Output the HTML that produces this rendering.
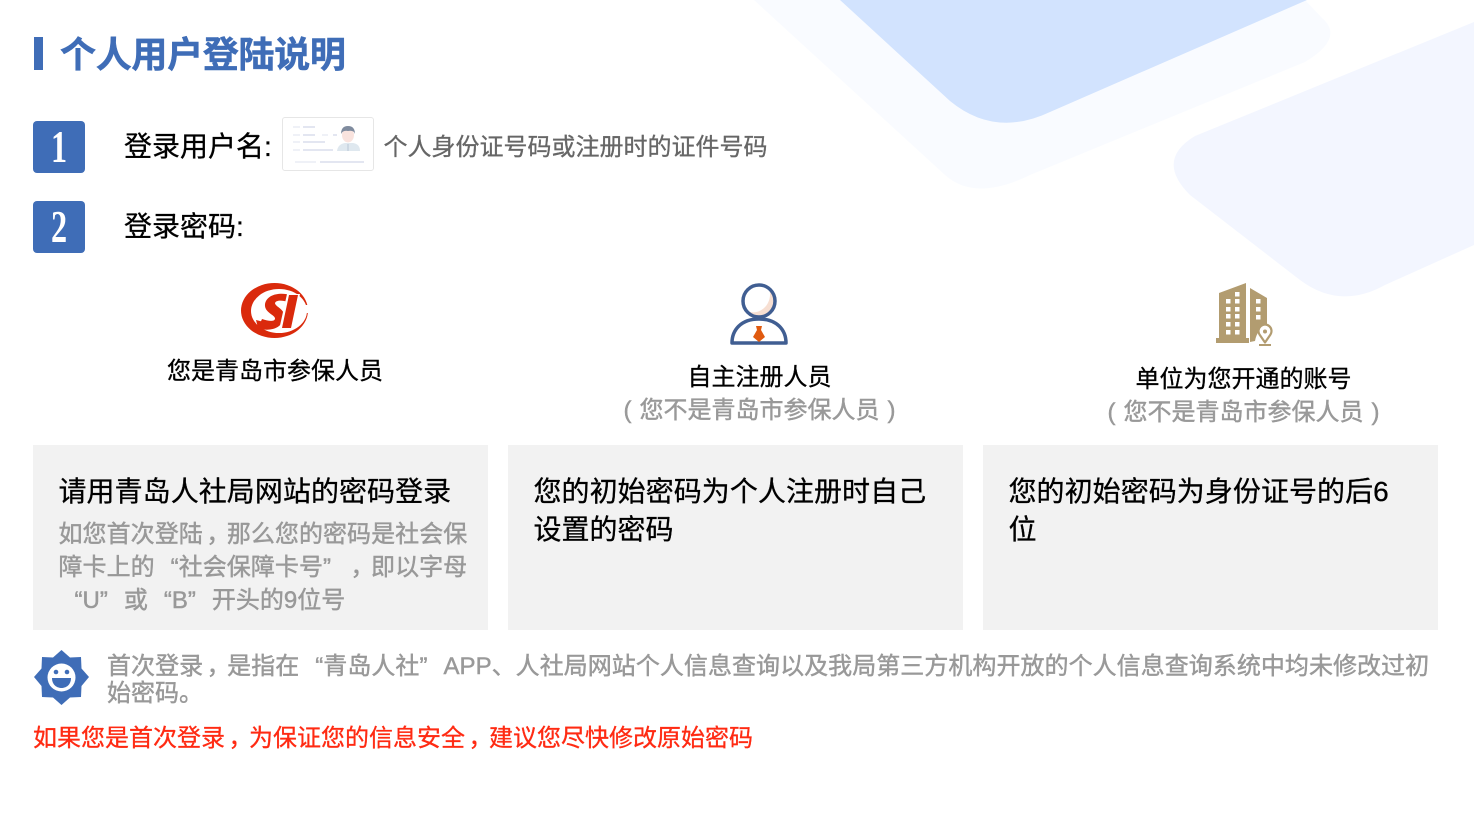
<!DOCTYPE html>
<html lang="zh">
<head>
<meta charset="utf-8">
<style>
html,body{margin:0;padding:0;background:#fff}
body{width:1474px;height:820px;position:relative;overflow:hidden;font-family:"Liberation Sans","Noto Sans CJK SC",sans-serif;color:#000}
.t{position:absolute;white-space:nowrap;line-height:1;-webkit-text-stroke:.3px currentColor}
.c{position:absolute;background:#f2f2f2;top:445px;width:455px;height:185px}
.n{position:absolute;left:33px;width:52px;height:52px;background:#3f6db7;border-radius:4px;overflow:hidden}
.n span{position:absolute;left:0;width:52px;top:3px;text-align:center;color:#fff;font:bold 46px/46px "Liberation Serif",serif;transform:scaleX(.7)}
.g{color:#999;-webkit-text-stroke:.45px currentColor}
.l,.r,.m{display:inline-block;width:24px;font-family:"Liberation Sans",sans-serif}
.l{text-align:right}.r{text-align:left}
.m{text-align:center}
.m i{font-style:normal;font-family:"Noto Sans CJK SC",sans-serif;position:relative;left:7px;display:inline-block;width:24px;margin-left:-7px;text-align:left;margin-right:0}
.pa,.pb{display:inline-block;width:24px;text-align:center;font-family:"Liberation Sans",sans-serif}
</style>
</head>
<body>
<svg style="position:absolute;left:0;top:0" width="1474" height="820">
<path d="M754 0L945 175Q975 202 1030 175L1305 62Q1345 38 1322 18L1305 0Z" fill="#f9fbff"/>
<path d="M840 0L950 101Q995 138 1050 112L1307 0Z" fill="#d2e3fe"/>
<path d="M1474 22L1195 136Q1155 160 1190 195L1300 280Q1340 310 1385 285L1474 245Z" fill="#f3f6ff"/>
</svg>

<div style="position:absolute;left:34px;top:37px;width:9px;height:33px;background:#3f6db7"></div>
<div class="t" style="left:60px;top:37px;font-size:36px;font-weight:700;letter-spacing:-.3px;color:#3f6db7;-webkit-text-stroke:.5px #3f6db7">个人用户登陆说明</div>

<div class="n" style="top:121px"><span>1</span></div>
<div class="n" style="top:201px"><span>2</span></div>

<div class="t" style="left:124px;top:133px;font-size:28px">登录用户名:</div>
<div style="position:absolute;left:282px;top:117px;width:90px;height:52px;border:1px solid #e6e6e6;border-radius:3px;background:#fff"></div>
<svg style="position:absolute;left:282px;top:117px" width="92" height="54">
<g fill="#e3e6f1">
<rect x="21" y="9" width="12" height="2"/><rect x="21" y="17" width="12" height="2"/><rect x="21" y="24" width="22" height="2"/><rect x="21" y="32" width="30" height="2"/><rect x="51" y="17" width="4" height="2"/><rect x="38" y="44" width="44" height="2"/>
</g>
<g fill="#eff1f7">
<rect x="11" y="9" width="7" height="2"/><rect x="11" y="17" width="7" height="2"/><rect x="11" y="24" width="7" height="2"/><rect x="11" y="32" width="7" height="2"/><rect x="40" y="17" width="6" height="2"/><rect x="13" y="44" width="21" height="2"/>
</g>
<path d="M55 34Q56 27 63 26H71Q78 27 78 34Z" fill="#dfe8ef"/>
<path d="M66 27V34" stroke="#b9c6d6" stroke-width="1"/>
<ellipse cx="66" cy="18" rx="6" ry="7.500" fill="#f9e3de"/>
<path d="M59 17Q59 9 66 9Q73 9 73 17Q72 13 66 14Q61 13 59 17Z" fill="#7f8b9e"/>
</svg>
<div class="t" style="left:383.500px;top:136px;font-size:24px;color:#666">个人身份证号码或注册时的证件号码</div>

<div class="t" style="left:124px;top:213px;font-size:28px">登录密码:</div>

<svg style="position:absolute;left:238px;top:280px" width="74" height="62" viewBox="0 0 74 62">
<path fill-rule="evenodd" d="M3 30.500A33.500 27.500 0 1 1 70 30.500A33.500 27.500 0 1 1 3 30.500ZM13 31A28 22 0 1 0 69 31A28 22 0 1 0 13 31Z" fill="#da2a0c"/>
<path d="M20 48L24 39C30 41 36 42 37 39C38 35 26 33 27 24C29 14 42 12 53 15L50 22C44 20 38 20 37 23C37 27 48 29 46 38C44 49 30 52 20 48Z" fill="#da2a0c"/>
<path d="M20 48L18 40L26 42L24 50Z" fill="#da2a0c"/>
<path d="M49 14H62L54 50H41Z" fill="#fff"/>
<path d="M51 15H60L53 48H44Z" fill="#da2a0c"/>
<rect x="65" y="25" width="8" height="8" fill="#fff"/>
</svg>
<div class="t" style="left:167px;top:360px;font-size:24px">您是青岛市参保人员</div>

<svg style="position:absolute;left:725px;top:280px" width="68" height="68" viewBox="0 0 68 68">
<path d="M7 63C7 50 16 39 34 39C52 39 61 50 61 63Z" fill="#fff" stroke="#405e92" stroke-width="3.500" stroke-linejoin="round"/>
<circle cx="34" cy="21" r="16" fill="#fff"/>
<path d="M21 30C27 34 35 33 41 26C45 21 46 14 44 9C50 14 52 27 45 33C38 39 26 38 21 30Z" fill="#f7dfd2"/>
<circle cx="34" cy="21" r="16" fill="none" stroke="#405e92" stroke-width="3.500"/>
<path d="M31 46H37L36 50L40 57L34 62L28 57L32 50Z" fill="#e05a0f"/>
</svg>
<div class="t" style="left:687.500px;top:366px;font-size:24px">自主注册人员</div>
<div class="t g" style="left:615.500px;top:399px;font-size:24px"><span class="pa">(</span>您不是青岛市参保人员<span class="pb">)</span></div>

<svg style="position:absolute;left:1199px;top:275px" width="90" height="75" viewBox="0 0 90 75">
<path d="M20 18L47 8V63H50V68H17V63H20Z" fill="#b29c70"/>
<path d="M51 13L68 23V52Q58 54 56 66L51 67Z" fill="#b29c70"/>
<g fill="#fff">
<rect x="36" y="17" width="4.500" height="4.500"/>
<rect x="27" y="24" width="4.500" height="4.500"/><rect x="36" y="24" width="4.500" height="4.500"/>
<rect x="27" y="32" width="4.500" height="4.500"/><rect x="36" y="32" width="4.500" height="4.500"/>
<rect x="27" y="39" width="4.500" height="4.500"/><rect x="36" y="39" width="4.500" height="4.500"/>
<rect x="27" y="47" width="4.500" height="4.500"/><rect x="36" y="47" width="4.500" height="4.500"/>
<rect x="27" y="55" width="4.500" height="4.500"/><rect x="36" y="55" width="4.500" height="4.500"/>
<rect x="57" y="24" width="4.500" height="4.500"/><rect x="57" y="32" width="4.500" height="4.500"/><rect x="57" y="40" width="4.500" height="4.500"/>
</g>
<path d="M66 67.500L60.500 59.500A6.500 6.500 0 1 1 71.500 59.500Z" fill="#fff" stroke="#b29c70" stroke-width="2.200" stroke-linejoin="round"/>
<circle cx="66" cy="56.500" r="2" fill="#b29c70"/>
<path d="M60 70H72" stroke="#b29c70" stroke-width="2"/>
</svg>
<div class="t" style="left:1135.500px;top:368px;font-size:24px">单位为您开通的账号</div>
<div class="t g" style="left:1099.500px;top:401px;font-size:24px"><span class="pa">(</span>您不是青岛市参保人员<span class="pb">)</span></div>

<div class="c" style="left:33px"></div>
<div class="c" style="left:508px"></div>
<div class="c" style="left:983px"></div>

<div class="t" style="left:58.500px;top:478px;font-size:28px;letter-spacing:.05px">请用青岛人社局网站的密码登录</div>
<div class="t g" style="left:58.500px;top:520px;font-size:24px;letter-spacing:.05px">如您首次登陆<span class="m"><i>，</i></span>那么您的密码是社会保</div>
<div class="t g" style="left:58.500px;top:553px;font-size:24px;letter-spacing:.05px">障卡上的<span class="l">“</span>社会保障卡号<span class="r">”</span><span class="m"><i>，</i></span>即以字母</div>
<div class="t g" style="left:58.500px;top:589px;font-size:24px"><span class="l">“</span>U<span class="r">”</span>或<span class="l">“</span>B<span class="r">”</span>开头的9位号</div>

<div class="t" style="left:533.500px;top:478px;font-size:28px;letter-spacing:.05px">您的初始密码为个人注册时自己</div>
<div class="t" style="left:533.500px;top:516px;font-size:28px">设置的密码</div>

<div class="t" style="left:1008.500px;top:478px;font-size:28px;letter-spacing:.05px">您的初始密码为身份证号的后6</div>
<div class="t" style="left:1008.500px;top:516px;font-size:28px">位</div>

<svg style="position:absolute;left:33px;top:649px" width="57" height="57" viewBox="0 0 57 57">
<path d="M28.500 1L37 8.500L48 8L48.500 19.500L56 28L48.500 37L48 48L37 48.500L28.500 56L20 48.500L9 48L8.500 37L1 28L8.500 19.500L9 8L20 8.500Z" fill="#3f6db7"/>
<circle cx="28.500" cy="28.500" r="14" fill="#fff"/>
<circle cx="23" cy="23" r="2.300" fill="#3f6db7"/><circle cx="34" cy="23" r="2.300" fill="#3f6db7"/>
<path d="M19 29H38C38 36 33 39 28.500 39C24 39 19 36 19 29Z" fill="#3f6db7"/>
</svg>
<div class="t g" style="left:107px;top:652px;font-size:24px;letter-spacing:.04px">首次登录<span class="m"><i>，</i></span>是指在<span class="l">“</span>青岛人社<span class="r">”</span>APP、人社局网站个人信息查询以及我局第三方机构开放的个人信息查询系统中均未修改过初</div>
<div class="t g" style="left:107px;top:682px;font-size:24px">始密码。</div>
<div class="t" style="left:33px;top:724px;font-size:24px;color:#ff2a12">如果您是首次登录<span class="m"><i>，</i></span>为保证您的信息安全<span class="m"><i>，</i></span>建议您尽快修改原始密码</div>
</body>
</html>
